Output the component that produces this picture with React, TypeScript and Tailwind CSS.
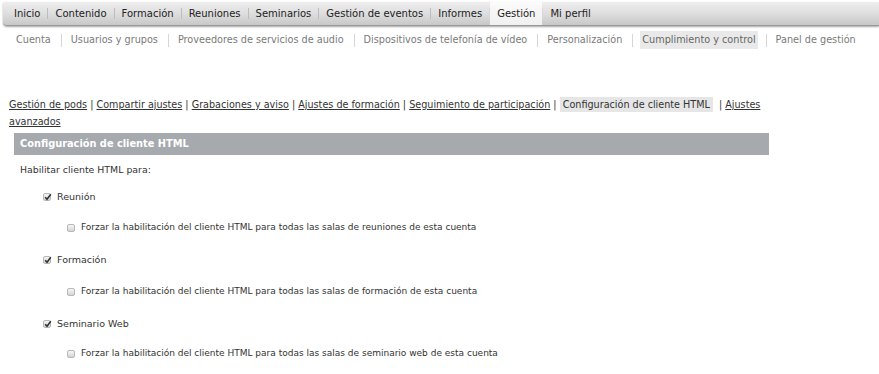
import React from "react";

const font = { fontFamily: '"DejaVu Sans", Verdana, sans-serif' };

function Box({ checked }: { checked: boolean }) {
  return (
    <span className="relative inline-block w-[8px] h-[8px] rounded-[2px] border border-[#b8b8b8] bg-gradient-to-b from-[#f6f6f6] to-[#d4d4d4] shrink-0">
      {checked && (
        <svg viewBox="0 0 8 8" className="absolute left-[0px] top-[-1px] w-[8px] h-[8px] overflow-visible">
          <path d="M1.2 4.2 L3 6.3 L6.8 1.2" stroke="#2f2f2f" strokeWidth="1.5" fill="none" />
        </svg>
      )}
    </span>
  );
}

function Sep({ cls }: { cls: string }) {
  return <span className={`inline-block w-px shrink-0 ${cls}`} />;
}

export default function App() {
  const top = ["Inicio", "Contenido", "Formación", "Reuniones", "Seminarios", "Gestión de eventos", "Informes", "Gestión", "Mi perfil"];
  const sub = ["Cuenta", "Usuarios y grupos", "Proveedores de servicios de audio", "Dispositivos de telefonía de vídeo", "Personalización", "Cumplimiento y control", "Panel de gestión"];
  const links = ["Gestión de pods", "Compartir ajustes", "Grabaciones y aviso", "Ajustes de formación", "Seguimiento de participación"];
  const items = [
    ["Reunión", "reuniones", "mt-[13px]", "mt-[17px]"],
    ["Formación", "formación", "mt-[18px]", "mt-[18px]"],
    ["Seminario Web", "seminario web", "mt-[18px]", "mt-[16px]"],
  ];
  return (
    <div className="w-[879px] h-[374px] bg-white overflow-hidden text-[#333]" style={font}>
      <div className="ml-[3px] mt-[2px] h-[24px] flex items-stretch rounded-bl-[4px] bg-gradient-to-b from-[#eeeeee] via-[#dedede] to-[#c8c8c8] border-b border-[#999] shadow-[0_1px_2px_rgba(0,0,0,0.35)] text-[10px] text-[#222] pl-[4px]">
        {top.map((t, i) => (
          <div key={t} className="flex items-center">
            {i > 0 && <Sep cls={`h-[11px] ${i === 7 || i === 8 ? "bg-[#d8d8d8]" : "bg-[#bdbdbd]"}`} />}
            <span className={`px-[7px] h-full flex items-center ${t === "Gestión" ? "bg-gradient-to-b from-[#fbfbfb] to-[#f0f0f0]" : ""}`}>{t}</span>
          </div>
        ))}
      </div>
      <div className="flex items-center mt-[5px] ml-[14px] text-[9.7px] text-[#7a7a7a] h-[18px]">
        {sub.map((t, i) => (
          <div key={t} className="flex items-center h-full">
            {i > 0 && <Sep cls="h-[13px] bg-[#d6d6d6] ml-[8px] mr-[7px]" />}
            <span className={`px-[2px] h-full flex items-center ${t === "Cumplimiento y control" ? "bg-[#e9e9e9] text-[#666]" : ""}`}>{t}</span>
          </div>
        ))}
      </div>
      <div className="mt-[47px] ml-[9px] w-[790px] text-[9.65px] leading-[17px] text-[#333]">
        {links.map((l) => (
          <span key={l}>
            <span className="underline">{l}</span>
            <span> | </span>
          </span>
        ))}
        <span className="bg-[#e6e6e6] px-[3px] py-[2px]">Configuración de cliente HTML</span>
        <span>&nbsp; | </span>
        <span className="underline">Ajustes avanzados</span>
      </div>
      <div className="ml-[14px] mt-[3px] w-[755px] h-[22px] bg-[#a6aaae] text-white font-bold text-[9.8px] flex items-center pl-[6px]">
        Configuración de cliente HTML
      </div>
      <div className="ml-[20px] mt-[8px] h-[14px] flex items-center text-[9.4px] text-[#333]">Habilitar cliente HTML para:</div>
      <div className="flex flex-col">
        {items.map(([a, b, m1, m2]) => (
          <div key={a} className="flex flex-col">
            <div className={`flex items-center ml-[43px] ${m1} h-[14px] text-[9.5px] text-[#333]`}>
              <Box checked />
              <span className="ml-[6px]">{a}</span>
            </div>
            <div className={`flex items-center ml-[67px] ${m2} h-[14px] text-[9px] text-[#333]`}>
              <Box checked={false} />
              <span className="ml-[6px]">Forzar la habilitación del cliente HTML para todas las salas de {b} de esta cuenta</span>
            </div>
          </div>
        ))}
      </div>
    </div>
  );
}
